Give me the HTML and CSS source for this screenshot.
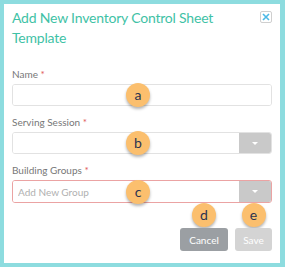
FILE: index.html
```html
<!DOCTYPE html>
<html lang="en">
<head>
    <meta charset="UTF-8">
    <meta name="viewport" content="width=device-width, initial-scale=1.0">
    <title>Add New Inventory Control Sheet Template</title>
    <link rel="stylesheet" href="styles.css">
</head>
<body>
    <div id="modal">
        <div class="header">
            <h1>Add New Inventory Control Sheet Template</h1>
            <button type="button" class="close">
                <svg width="8" height="8" viewBox="0 0 8 8"><path d="M1 1L7 7M7 1L1 7" stroke="#4cb9e6" stroke-width="1.6"/></svg>
            </button>
        </div>

        <div class="field">
            <label>Name <span class="req">*</span></label>
            <div class="control">
                <input type="text">
            </div>
            <span class="badge">a</span>
        </div>

        <div class="field">
            <label>Serving Session <span class="req">*</span></label>
            <div class="control">
                <input type="text">
                <span class="toggle"><span class="caret"></span></span>
            </div>
            <span class="badge">b</span>
        </div>

        <div class="field">
            <label>Building Groups <span class="req">*</span></label>
            <div class="control invalid">
                <input type="text" placeholder="Add New Group">
                <span class="toggle"><span class="caret"></span></span>
            </div>
            <span class="badge">c</span>
        </div>

        <div class="actions">
            <div class="action">
                <span class="badge">d</span>
                <button type="button" class="btn cancel">Cancel</button>
            </div>
            <div class="action">
                <span class="badge">e</span>
                <button type="button" class="btn save">Save</button>
            </div>
        </div>
    </div>
</body>
</html>
```

FILE: styles.css
```css
* {
    margin: 0;
    padding: 0;
    box-sizing: border-box;
    font-family: Lato, "Open Sans", sans-serif;
}

body {
    background-color: #8ddcdf;
}

#modal {
    background-color: white;
    margin: 4px 5px 4px 4px;
    height: 259px;
    padding: 4px 8px 8px 8px;
}

.header {
    display: flex;
    justify-content: space-between;
    align-items: flex-start;
}

h1 {
    color: #3fc2a6;
    font-size: 14px;
    letter-spacing: -0.2px;
    font-weight: normal;
    line-height: 20px;
    width: 230px;
}

.close {
    margin-top: 3px;
    width: 12px;
    height: 12px;
    background: white;
    border: 1px solid #cfcfcf;
    border-radius: 2px;
    display: flex;
    align-items: center;
    justify-content: center;
}

.field {
    position: relative;
    margin-top: 19px;
}

.field + .field {
    margin-top: 9px;
}

label {
    display: block;
    color: #777;
    font-size: 10px;
    line-height: 14px;
    margin-bottom: 3px;
}

.req {
    color: #e05757;
}

.control {
    display: flex;
    height: 22px;
    border: 1px solid #e2e2e2;
    border-radius: 3px;
    overflow: hidden;
}

.control.invalid {
    border-color: #eba3a3;
    height: 23px;
}

.control input {
    flex: 1;
    border: none;
    outline: none;
    padding: 0 5px;
    font-size: 10px;
    color: #555;
    background: white;
}

.control input::placeholder {
    color: #b0b0b0;
}

.toggle {
    width: 32px;
    background-color: #c9c9c9;
    display: flex;
    align-items: center;
    justify-content: center;
}

.caret {
    width: 0;
    height: 0;
    border-left: 3px solid transparent;
    border-right: 3px solid transparent;
    border-top: 3px solid white;
}

.badge {
    width: 24px;
    height: 24px;
    border-radius: 50%;
    background-color: #fbbf6e;
    color: #2b3450;
    font-size: 14px;
    line-height: 24px;
    text-align: center;
    box-shadow: 0px 2px 3px rgba(0, 0, 0, 0.3);
}

.field .badge {
    position: absolute;
    left: 114px;
    bottom: -1px;
}

.actions {
    display: flex;
    justify-content: flex-end;
    gap: 7px;
    margin-top: 0;
}

.action {
    display: flex;
    flex-direction: column;
    align-items: center;
    gap: 1px;
}

.btn {
    height: 23px;
    border: none;
    border-radius: 3px;
    color: white;
    font-size: 10px;
}

.cancel {
    width: 48px;
    background-color: #9b9fa3;
}

.save {
    width: 37px;
    background-color: #d4d4d4;
}
```
